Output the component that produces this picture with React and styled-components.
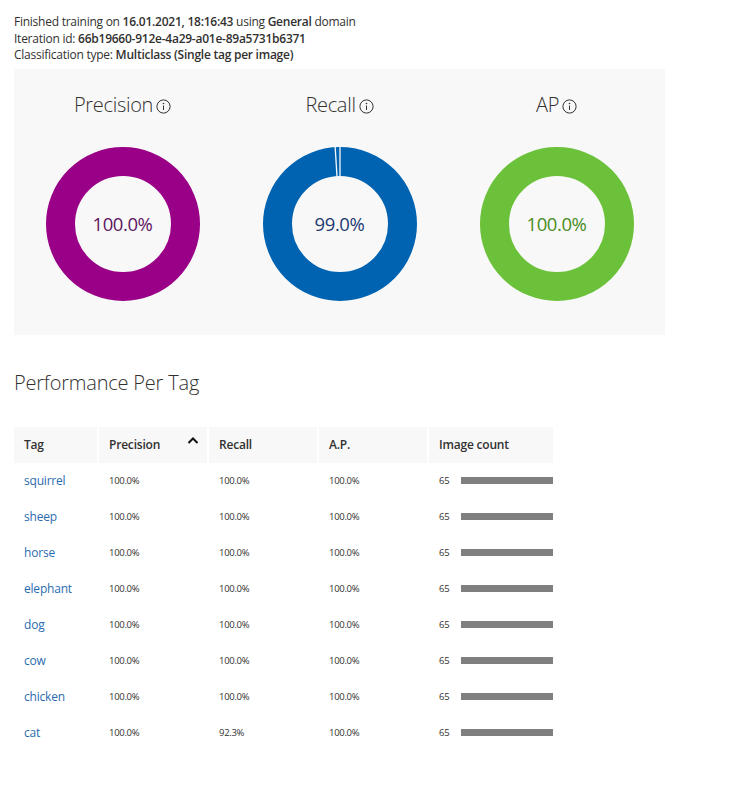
import React from 'react'
import styled, { createGlobalStyle } from 'styled-components'

const GlobalStyle = createGlobalStyle`
  body {
    margin: 0;
    background: #ffffff;
    font-family: "Open Sans", "Noto Sans", sans-serif;
    color: #323130;
  }
`;

const Page = styled.div`
  padding: 14px 14px 40px 14px;
  width: 743px;
  box-sizing: border-box;
`;

const InfoLine = styled.div`
  font-size: 12px;
  line-height: 16.5px;
  letter-spacing: -0.25px;
  color: #323130;
  b {
    font-weight: 600;
  }
`;

const Panel = styled.div`
  margin-top: 5px;
  width: 651px;
  background: #f8f8f8;
  display: grid;
  grid-template-columns: repeat(3, 1fr);
  padding: 22px 0 34px 0;
`;

const Metric = styled.div`
  display: flex;
  flex-direction: column;
  align-items: center;
`;

const MetricTitle = styled.div`
  display: flex;
  align-items: center;
  gap: 3px;
  font-size: 20px;
  font-weight: 300;
  line-height: 28px;
  letter-spacing: -0.3px;
  color: #323130;
`;

const Donut = styled.div`
  position: relative;
  margin-top: 28px;
  width: 154px;
  height: 154px;
`;

const DonutLabel = styled.div`
  position: absolute;
  inset: 0;
  display: flex;
  align-items: center;
  justify-content: center;
  font-size: 18.5px;
  letter-spacing: -0.4px;
  color: ${props => props.color};
`;

const Heading = styled.h2`
  margin: 34px 0 0 0;
  font-size: 20px;
  font-weight: 300;
  line-height: 28px;
  letter-spacing: -0.2px;
  color: #323130;
`;

const Table = styled.div`
  margin-top: 30px;
  display: grid;
  grid-template-columns: 83px 108px 108px 108px 124px;
  column-gap: 2px;
  width: 539px;
`;

const HeadCell = styled.div`
  height: 36px;
  background: #f8f8f8;
  display: flex;
  align-items: center;
  justify-content: space-between;
  padding: 0 8px 0 10px;
  font-size: 12px;
  font-weight: 600;
  letter-spacing: -0.2px;
  color: #323130;
`;

const Cell = styled.div`
  height: 36px;
  display: flex;
  align-items: center;
  padding-left: 10px;
  font-size: ${props => (props.tag ? '12px' : '9.5px')};
  letter-spacing: ${props => (props.tag ? '-0.2px' : '-0.3px')};
  color: ${props => (props.tag ? '#2b6cb0' : '#323130')};
`;

const CountCell = styled(Cell)`
  padding-left: 10px;
  gap: 12px;
`;

const Bar = styled.div`
  flex: 1;
  height: 7px;
  background: #7f7f7f;
`;

function InfoIcon() {
  return (
    <svg width="15" height="15" viewBox="0 0 15 15" style={{ marginTop: 3 }}>
      <circle cx="7.5" cy="7.5" r="6.6" fill="none" stroke="#323130" strokeWidth="1" />
      <circle cx="7.5" cy="4.5" r="0.8" fill="#323130" />
      <line x1="7.5" y1="6.5" x2="7.5" y2="11" stroke="#323130" strokeWidth="1" />
    </svg>
  );
}

function ChevronUp() {
  return (
    <svg width="12" height="10" viewBox="0 0 12 10" style={{ marginTop: -8 }}>
      <path d="M1.5 7 L6 2.5 L10.5 7" fill="none" stroke="#111" strokeWidth="2" />
    </svg>
  );
}

function Ring({ color, textColor, value, gap }) {
  const r = 62.5;
  const lines = [];
  if (gap) {
    const a = (gap / 100) * 2 * Math.PI;
    [0, -a].forEach((ang, i) => {
      const x1 = 77 + Math.sin(ang) * 47;
      const y1 = 77 - Math.cos(ang) * 47;
      const x2 = 77 + Math.sin(ang) * 78;
      const y2 = 77 - Math.cos(ang) * 78;
      lines.push(<line key={i} x1={x1} y1={y1} x2={x2} y2={y2} stroke="#f8f8f8" strokeWidth="1.3" />);
    });
  }
  return (
    <Donut>
      <svg width="154" height="154" viewBox="0 0 154 154">
        <circle cx="77" cy="77" r={r} fill="none" stroke={color} strokeWidth="29" />
        {lines}
      </svg>
      <DonutLabel color={textColor}>{value}</DonutLabel>
    </Donut>
  );
}

const metrics = [
  { title: 'Precision', value: '100.0%', color: '#990087', text: '#5e1561' },
  { title: 'Recall', value: '99.0%', color: '#0063b1', text: '#1f3a74', gap: 1 },
  { title: 'AP', value: '100.0%', color: '#6bc139', text: '#4a8c22' },
];

const rows = [
  ['squirrel', '100.0%', '100.0%', '100.0%'],
  ['sheep', '100.0%', '100.0%', '100.0%'],
  ['horse', '100.0%', '100.0%', '100.0%'],
  ['elephant', '100.0%', '100.0%', '100.0%'],
  ['dog', '100.0%', '100.0%', '100.0%'],
  ['cow', '100.0%', '100.0%', '100.0%'],
  ['chicken', '100.0%', '100.0%', '100.0%'],
  ['cat', '100.0%', '92.3%', '100.0%'],
];

export default function App() {
  return (
    <Page>
      <GlobalStyle />
      <InfoLine>
        Finished training on <b>16.01.2021, 18:16:43</b> using <b>General</b> domain
      </InfoLine>
      <InfoLine>
        Iteration id: <b>66b19660-912e-4a29-a01e-89a5731b6371</b>
      </InfoLine>
      <InfoLine>
        Classification type: <b>Multiclass (Single tag per image)</b>
      </InfoLine>

      <Panel>
        {metrics.map(m => (
          <Metric key={m.title}>
            <MetricTitle>
              {m.title}
              <InfoIcon />
            </MetricTitle>
            <Ring color={m.color} textColor={m.text} value={m.value} gap={m.gap} />
          </Metric>
        ))}
      </Panel>

      <Heading>Performance Per Tag</Heading>

      <Table>
        <HeadCell>Tag</HeadCell>
        <HeadCell>
          Precision
          <ChevronUp />
        </HeadCell>
        <HeadCell>Recall</HeadCell>
        <HeadCell>A.P.</HeadCell>
        <HeadCell>Image count</HeadCell>
        {rows.map(row => (
          <React.Fragment key={row[0]}>
            <Cell tag>{row[0]}</Cell>
            <Cell>{row[1]}</Cell>
            <Cell>{row[2]}</Cell>
            <Cell>{row[3]}</Cell>
            <CountCell>
              65
              <Bar />
            </CountCell>
          </React.Fragment>
        ))}
      </Table>
    </Page>
  );
}
